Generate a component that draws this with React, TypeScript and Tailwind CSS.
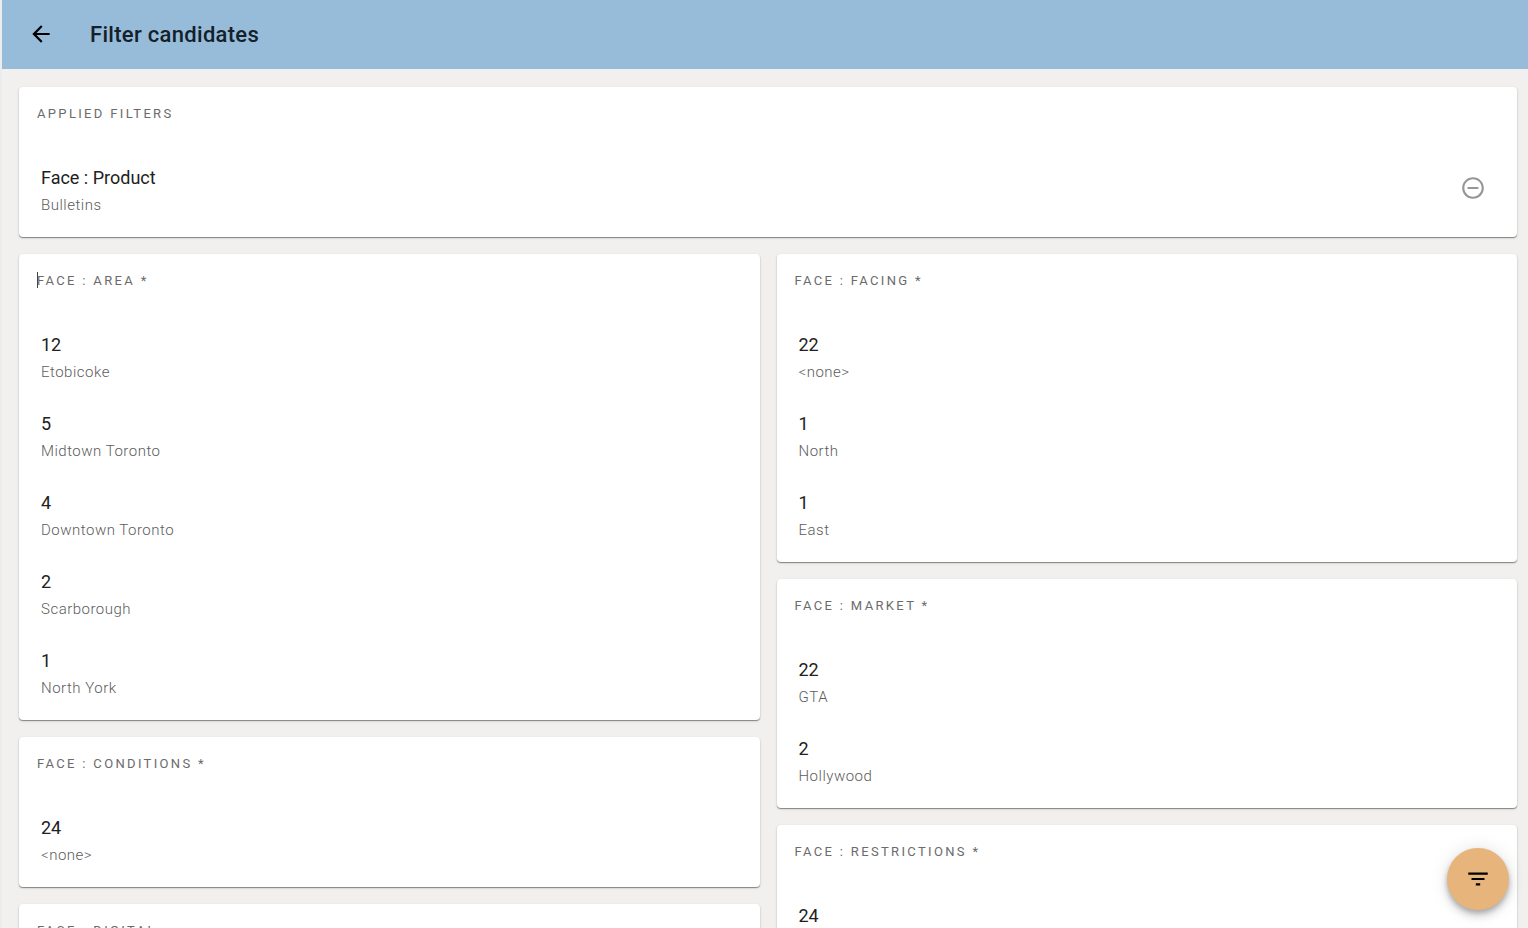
import { useState } from "react";
import { MdArrowBack, MdFilterList, MdRemoveCircleOutline } from "react-icons/md";

type Option = { title: string; subtitle: string };
type Group = { label: string; options: Option[] };

const leftGroups: Group[] = [
  {
    label: "Face : Area *",
    options: [
      { title: "12", subtitle: "Etobicoke" },
      { title: "5", subtitle: "Midtown Toronto" },
      { title: "4", subtitle: "Downtown Toronto" },
      { title: "2", subtitle: "Scarborough" },
      { title: "1", subtitle: "North York" },
    ],
  },
  { label: "Face : Conditions *", options: [{ title: "24", subtitle: "<none>" }] },
  { label: "Face : Digital", options: [] },
];

const rightGroups: Group[] = [
  {
    label: "Face : Facing *",
    options: [
      { title: "22", subtitle: "<none>" },
      { title: "1", subtitle: "North" },
      { title: "1", subtitle: "East" },
    ],
  },
  {
    label: "Face : Market *",
    options: [
      { title: "22", subtitle: "GTA" },
      { title: "2", subtitle: "Hollywood" },
    ],
  },
  { label: "Face : Restrictions *", options: [{ title: "24", subtitle: "<none>" }] },
];

function Card({ label, caret, children }: { label: string; caret?: boolean; children?: React.ReactNode }) {
  return (
    <section className="bg-white rounded pb-[9px] shadow-[0_1px_1px_rgba(0,0,0,0.4),0_1px_3px_rgba(0,0,0,0.12)]">
      <h2 className="relative h-[62px] pt-[17px] px-[18px] text-[13px] leading-5 tracking-[0.18em] uppercase text-[#6b6b6b]">
        {caret && <span className="absolute left-[18px] top-[18px] w-px h-4 bg-[#444444]" />}
        {label}
      </h2>
      {children}
    </section>
  );
}

function ItemText({ title, subtitle }: Option) {
  return (
    <span className="flex flex-col gap-[5px] text-left">
      <span className="text-lg leading-6 text-[#212121]">{title}</span>
      <span className="text-[15px] leading-5 font-light tracking-[0.5px] text-[#5c5c5c]">{subtitle}</span>
    </span>
  );
}

function Column({ groups, caret }: { groups: Group[]; caret?: boolean }) {
  return (
    <div className="flex-1 min-w-0 flex flex-col gap-[17px]">
      {groups.map((g, i) => (
        <Card key={g.label} label={g.label} caret={caret && i === 0}>
          <ul>
            {g.options.map(o => (
              <li key={o.subtitle}>
                <button className="w-full h-[79px] px-[22px] pt-[3px] flex items-center cursor-pointer hover:bg-black/5">
                  <ItemText {...o} />
                </button>
              </li>
            ))}
          </ul>
        </Card>
      ))}
    </div>
  );
}

export default function App() {
  const [applied, setApplied] = useState<Option[]>([{ title: "Face : Product", subtitle: "Bulletins" }]);

  return (
    <div className="h-screen flex flex-col bg-[#f1f0ee] border-l-2 border-[#ececec] font-[Roboto,sans-serif]">
      <header className="shrink-0 h-[69px] bg-[#96bcd9] flex items-center gap-9 px-[26px]">
        <button aria-label="Back" className="pb-px cursor-pointer">
          <MdArrowBack size={26} />
        </button>
        <h1 className="text-[22px] leading-8 font-medium tracking-[0.3px] text-[#14202a]">Filter candidates</h1>
      </header>

      <main className="flex-1 min-h-0 overflow-y-auto [scrollbar-width:none] pl-[17px] pr-[11px] pt-[18px] pb-6">
        <Card label="Applied filters">
          <ul>
            {applied.map(f => (
              <li key={f.title} className="h-[79px] pb-px pl-[22px] pr-[31px] flex items-center justify-between">
                <span className="pt-1">
                  <ItemText {...f} />
                </span>
                <button
                  aria-label={`Remove ${f.title}`}
                  className="text-[#969696] cursor-pointer"
                  onClick={() => setApplied(applied.filter(a => a !== f))}
                >
                  <MdRemoveCircleOutline size={26} />
                </button>
              </li>
            ))}
          </ul>
        </Card>
        <div className="mt-[17px] flex items-start gap-[17px]">
          <Column groups={leftGroups} caret />
          <Column groups={rightGroups} />
        </div>
      </main>

      <button
        aria-label="Apply filters"
        className="fixed right-[19px] bottom-[18px] size-[62px] rounded-full bg-[#e7b47c] flex items-center justify-center cursor-pointer shadow-[0_3px_5px_rgba(0,0,0,0.2),0_6px_10px_rgba(0,0,0,0.14),0_1px_18px_rgba(0,0,0,0.12)]"
      >
        <MdFilterList size={26} />
      </button>
    </div>
  );
}
